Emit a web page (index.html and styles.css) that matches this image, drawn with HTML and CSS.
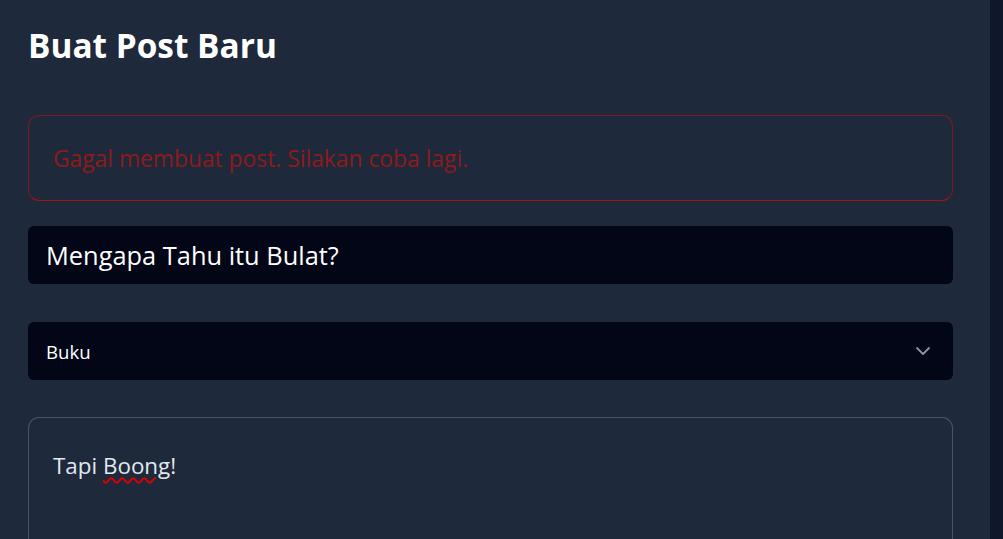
FILE: index.html
```html
<!DOCTYPE html>
<html lang="id">
<head>
<meta charset="utf-8">
<title>Buat Post Baru</title>
<link rel="stylesheet" href="styles.css">
</head>
<body>
<div class="page">
  <main class="main">
    <h1 class="title">Buat Post Baru</h1>
    <div class="alert">Gagal membuat post. Silakan coba lagi.</div>
    <div class="field field-title">Mengapa Tahu itu Bulat?</div>
    <div class="field field-select">
      <span>Buku</span>
      <svg class="chevron" width="16" height="10" viewBox="0 0 16 10"><path d="M2 2 L8 8 L14 2" fill="none" stroke="#8b95a7" stroke-width="1.8" stroke-linecap="round" stroke-linejoin="round"/></svg>
    </div>
    <div class="textarea">Tapi <span class="spell">Boong</span>!</div>
  </main>
  <aside class="strip"></aside>
</div>
</body>
</html>
```

FILE: styles.css
```css
* { box-sizing: border-box; }
html, body { margin: 0; height: 100%; overflow: hidden; }
body {
  background: #1e293b;
  font-family: "Open Sans", "Noto Sans", sans-serif;
  color: #fff;
}
.page { display: flex; height: 539px; }
.main { flex: 1; padding: 22px 37px 0 28px; display: flex; flex-direction: column; }
.strip { width: 13px; background: #0f172a; }
.title {
  margin: 0;
  font-size: 33.4px;
  font-weight: 700;
  line-height: 46px;
}
.alert {
  margin-top: 47px;
  height: 86px;
  border: 1px solid #7a1a22;
  border-bottom-color: #a81212;
  border-radius: 11px;
  padding: 0 0 0 24px;
  display: flex;
  align-items: center;
  color: #8f1a1a;
  font-size: 22.8px;
}
.field {
  background: #020617;
  border-radius: 6px;
  height: 58px;
  display: flex;
  align-items: center;
  padding: 0 22px 0 18px;
}
.field-title { margin-top: 25px; font-size: 25.4px; }
.field-select { margin-top: 38px; justify-content: space-between; font-size: 18.6px; }
.chevron { display: block; }
.textarea {
  margin-top: 37px;
  flex: 1;
  border: 1px solid #475569;
  border-bottom: none;
  border-radius: 11px 11px 0 0;
  padding: 33px 24px 0 24px;
  font-size: 22.4px;
  line-height: 30px;
  color: #e2e8f0;
}
.spell {
  text-decoration: underline wavy #e00000;
  text-decoration-thickness: 1.5px;
  text-underline-offset: 3px;
}
```
